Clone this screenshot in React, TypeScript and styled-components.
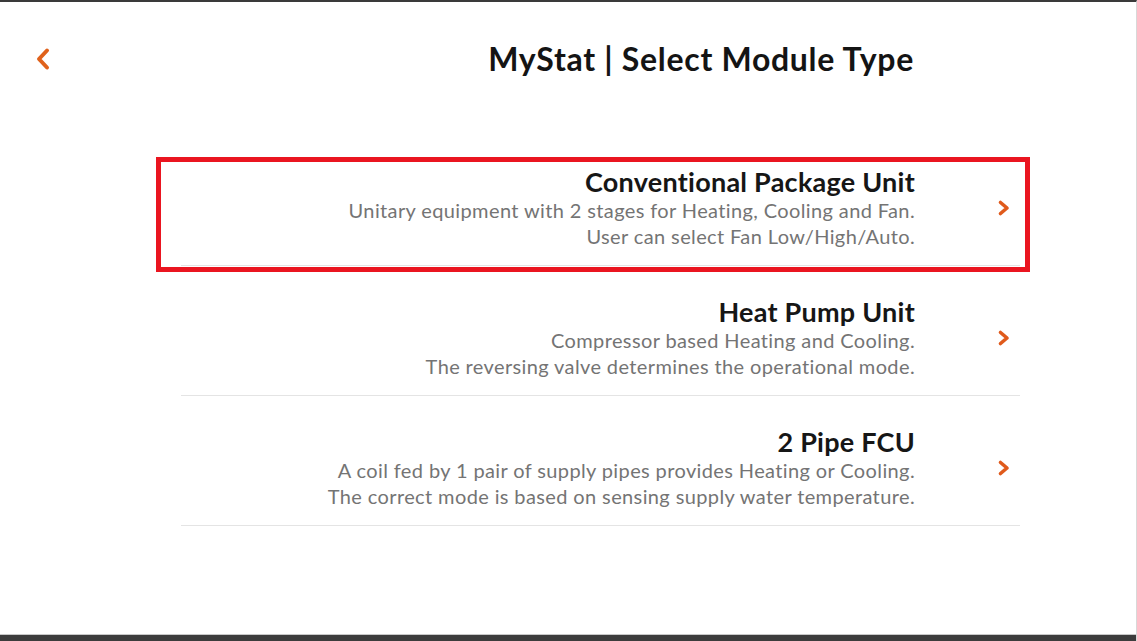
import React from "react";
import styled, { createGlobalStyle } from "styled-components";

const Global = createGlobalStyle`
  html, body { margin: 0; padding: 0; background: #fff; }
  body { font-family: Lato, "Open Sans", "Liberation Sans", sans-serif; }
  * { box-sizing: border-box; }
`;

const Screen = styled.div`
  width: 1137px;
  height: 641px;
  display: flex;
  flex-direction: column;
  border-top: 2px solid #3a3a3a;
  border-right: 1px solid #d8d8d8;
  background: #fff;
  overflow: hidden;
`;

const Content = styled.div`
  flex: 1;
  display: flex;
  flex-direction: column;
`;

const BottomBar = styled.div`
  height: 7px;
  background: #3c3c3c;
  border-top: 1px solid #c8c8c8;
`;

const Header = styled.div`
  display: flex;
  align-items: flex-start;
  padding: 39px 222px 0 35px;
  height: 110px;
`;

const BackButton = styled.button`
  border: none;
  background: none;
  padding: 0;
  margin-top: 6px;
  width: 16px;
  height: 24px;
  cursor: pointer;
  display: flex;
`;

const Title = styled.h1`
  flex: 1;
  margin: 0;
  text-align: right;
  font-size: 32px;
  line-height: 35px;
  letter-spacing: 0.7px;
  font-weight: 700;
  color: #141414;
`;

const List = styled.div`
  margin: 24px 0 0 181px;
  width: 839px;
  display: flex;
  flex-direction: column;
`;

const Row = styled.div<{ $selected?: boolean }>`
  position: relative;
  display: flex;
  align-items: center;
  padding: 30px 0 16px;
  border-bottom: 1px solid #e4e4e4;
  cursor: pointer;
  &::after {
    content: "";
    display: ${(p) => (p.$selected ? "block" : "none")};
    position: absolute;
    left: -25px;
    right: -10px;
    top: 21px;
    bottom: -7px;
    border: 5px solid #ea1520;
    pointer-events: none;
  }
`;

const TextBlock = styled.div`
  flex: 1;
  text-align: right;
`;

const RowTitle = styled.div`
  font-size: 27px;
  line-height: 31px;
  letter-spacing: 0.25px;
  font-weight: 700;
  color: #161616;
`;

const Desc = styled.div`
  font-size: 20px;
  line-height: 26px;
  letter-spacing: 0.38px;
  color: #747474;
`;

const ChevronCell = styled.div`
  width: 105px;
  display: flex;
  padding-left: 82px;
`;

const Chevron = () => (
  <svg width="14" height="18" viewBox="0 0 14 18">
    <polyline
      points="3.5,3.5 10,9 3.5,14.5"
      fill="none"
      stroke="#e05a1c"
      strokeWidth="3.6"
      strokeLinecap="round"
      strokeLinejoin="round"
    />
  </svg>
);

const BackChevron = () => (
  <svg width="16" height="24" viewBox="0 0 16 24">
    <polyline
      points="12,3.5 4,12 12,20.5"
      fill="none"
      stroke="#e0621c"
      strokeWidth="4"
      strokeLinecap="round"
      strokeLinejoin="round"
    />
  </svg>
);

const modules = [
  {
    title: "Conventional Package Unit",
    lines: [
      "Unitary equipment with 2 stages for Heating, Cooling and Fan.",
      "User can select Fan Low/High/Auto.",
    ],
    selected: true,
  },
  {
    title: "Heat Pump Unit",
    lines: [
      "Compressor based Heating and Cooling.",
      "The reversing valve determines the operational mode.",
    ],
  },
  {
    title: "2 Pipe FCU",
    lines: [
      "A coil fed by 1 pair of supply pipes provides Heating or Cooling.",
      "The correct mode is based on sensing supply water temperature.",
    ],
  },
];

export default function App() {
  return (
    <>
      <Global />
      <Screen>
        <Content>
          <Header>
            <BackButton aria-label="Back">
              <BackChevron />
            </BackButton>
            <Title>MyStat | Select Module Type</Title>
          </Header>
          <List>
            {modules.map((m) => (
              <Row key={m.title} $selected={m.selected}>
                <TextBlock>
                  <RowTitle>{m.title}</RowTitle>
                  {m.lines.map((l) => (
                    <Desc key={l}>{l}</Desc>
                  ))}
                </TextBlock>
                <ChevronCell>
                  <Chevron />
                </ChevronCell>
              </Row>
            ))}
          </List>
        </Content>
        <BottomBar />
      </Screen>
    </>
  );
}
